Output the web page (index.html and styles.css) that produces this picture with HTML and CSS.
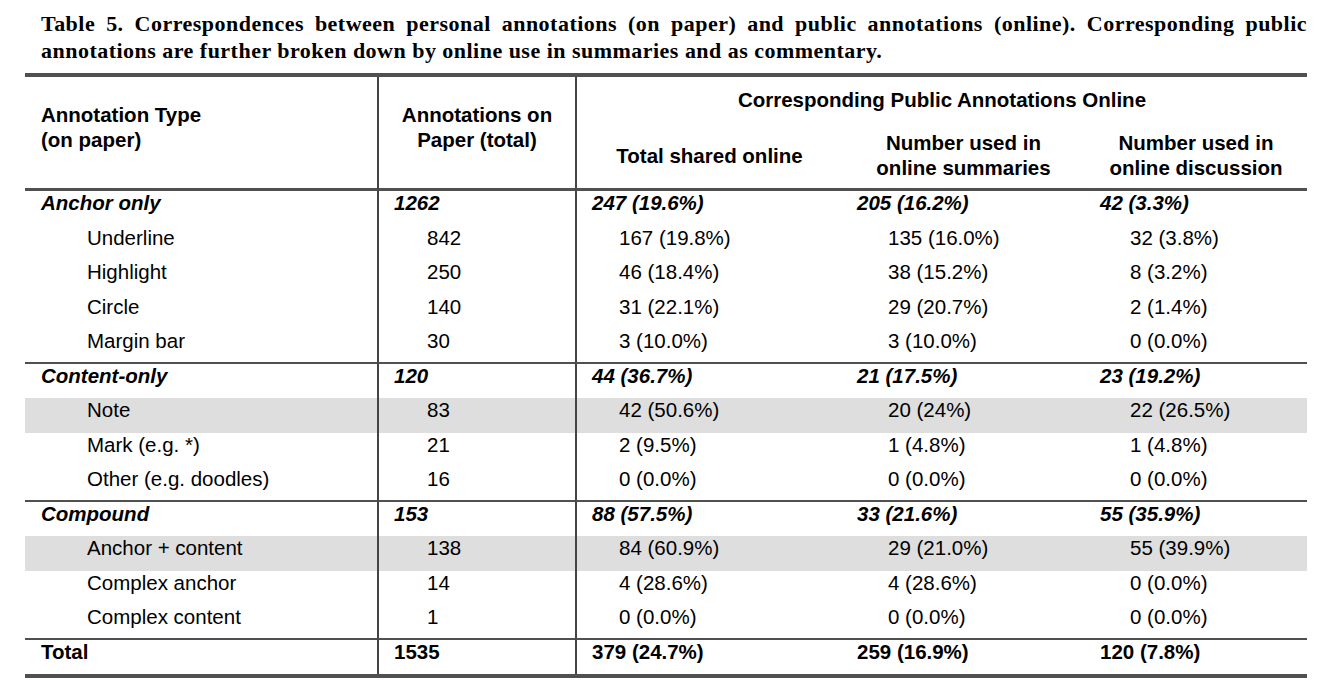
FILE: index.html
```html
<!DOCTYPE html>
<html>
<head>
<meta charset="utf-8">
<link rel="stylesheet" href="styles.css">
</head>
<body>
<div class="page">
  <p class="caption"><span class="cap-line1">Table 5. Correspondences between personal annotations (on paper) and public annotations (online). Corresponding public</span><span class="cap-line2">annotations are further broken down by online use in summaries and as commentary.</span></p>
  <table class="data">
    <colgroup>
      <col class="c1"><col class="c2"><col class="c3"><col class="c4"><col class="c5">
    </colgroup>
    <thead>
      <tr class="h1">
        <th class="type" rowspan="2">Annotation Type<br>(on paper)</th>
        <th class="paper vl" rowspan="2">Annotations on<br>Paper (total)</th>
        <th class="group vl" colspan="3">Corresponding Public Annotations Online</th>
      </tr>
      <tr class="h2">
        <th class="vl">Total shared online</th>
        <th>Number used in<br>online summaries</th>
        <th>Number used in<br>online discussion</th>
      </tr>
    </thead>
    <tbody>
      <tr class="grp"><td>Anchor only</td><td class="vl">1262</td><td class="vl">247 (19.6%)</td><td>205 (16.2%)</td><td>42 (3.3%)</td></tr>
      <tr class="sub"><td>Underline</td><td class="vl">842</td><td class="vl">167 (19.8%)</td><td>135 (16.0%)</td><td>32 (3.8%)</td></tr>
      <tr class="sub"><td>Highlight</td><td class="vl">250</td><td class="vl">46 (18.4%)</td><td>38 (15.2%)</td><td>8 (3.2%)</td></tr>
      <tr class="sub"><td>Circle</td><td class="vl">140</td><td class="vl">31 (22.1%)</td><td>29 (20.7%)</td><td>2 (1.4%)</td></tr>
      <tr class="sub pre"><td>Margin bar</td><td class="vl">30</td><td class="vl">3 (10.0%)</td><td>3 (10.0%)</td><td>0 (0.0%)</td></tr>
      <tr class="grp sep"><td>Content-only</td><td class="vl">120</td><td class="vl">44 (36.7%)</td><td>21 (17.5%)</td><td>23 (19.2%)</td></tr>
      <tr class="sub shade"><td>Note</td><td class="vl">83</td><td class="vl">42 (50.6%)</td><td>20 (24%)</td><td>22 (26.5%)</td></tr>
      <tr class="sub"><td>Mark (e.g. *)</td><td class="vl">21</td><td class="vl">2 (9.5%)</td><td>1 (4.8%)</td><td>1 (4.8%)</td></tr>
      <tr class="sub pre"><td>Other (e.g. doodles)</td><td class="vl">16</td><td class="vl">0 (0.0%)</td><td>0 (0.0%)</td><td>0 (0.0%)</td></tr>
      <tr class="grp sep"><td>Compound</td><td class="vl">153</td><td class="vl">88 (57.5%)</td><td>33 (21.6%)</td><td>55 (35.9%)</td></tr>
      <tr class="sub shade"><td>Anchor + content</td><td class="vl">138</td><td class="vl">84 (60.9%)</td><td>29 (21.0%)</td><td>55 (39.9%)</td></tr>
      <tr class="sub"><td>Complex anchor</td><td class="vl">14</td><td class="vl">4 (28.6%)</td><td>4 (28.6%)</td><td>0 (0.0%)</td></tr>
      <tr class="sub pre"><td>Complex content</td><td class="vl">1</td><td class="vl">0 (0.0%)</td><td>0 (0.0%)</td><td>0 (0.0%)</td></tr>
      <tr class="total sep"><td>Total</td><td class="vl">1535</td><td class="vl">379 (24.7%)</td><td>259 (16.9%)</td><td>120 (7.8%)</td></tr>
    </tbody>
  </table>
</div>
</body>
</html>
```
FILE: styles.css
```css
html, body {
  margin: 0;
  padding: 0;
  background: #fff;
}

.page {
  padding: 10px 0 0 25px;
  width: 1282px;
}

.caption {
  margin: 0 0 9px 16px;
  font-family: "Liberation Serif", "Times New Roman", serif;
  font-weight: bold;
  font-size: 22px;
  letter-spacing: 0.48px;
  line-height: 27px;
  color: #000;
}

.cap-line1 {
  display: block;
  text-align: justify;
  text-align-last: justify;
}

.cap-line2 {
  display: block;
}

.data {
  width: 1282px;
  table-layout: fixed;
  border-collapse: separate;
  border-spacing: 0;
  border-top: 4px solid #505050;
  border-bottom: 4px solid #505050;
  font-family: "Liberation Sans", Arial, sans-serif;
  font-size: 20.5px;
  color: #000;
}

.c1 { width: 352px; }
.c2 { width: 198px; }
.c3 { width: 267px; }
.c4 { width: 243px; }
.c5 { width: 222px; }

th {
  font-weight: bold;
  line-height: 25px;
  padding: 0;
}

.vl {
  border-left: 2px solid #444;
}

.h1 th.type,
.h1 th.paper {
  vertical-align: top;
  padding-top: 25px;
  border-bottom: 3px solid #505050;
}

.h1 th.type {
  text-align: left;
  padding-left: 16px;
}

.h1 th.paper {
  text-align: center;
}

.h1 th.group {
  text-align: center;
  padding: 10px 0;
}

.h2 th {
  text-align: center;
  vertical-align: middle;
  padding: 8px 0;
  border-bottom: 3px solid #505050;
}

td {
  line-height: 24px;
  padding: 0 0 10.5px 15px;
  vertical-align: top;
  white-space: nowrap;
}

td:first-child { padding-left: 16px; }

.grp td {
  font-weight: bold;
  font-style: italic;
}

.pre td {
  padding-bottom: 9px;
}

.sep td {
  border-top: 2px solid #505050;
  padding-bottom: 10px;
}

.total td {
  font-weight: bold;
}

.total.sep td {
  padding-bottom: 9.5px;
}

.sub td:nth-child(1) { padding-left: 62px; }
.sub td:nth-child(2) { padding-left: 48px; }
.sub td:nth-child(3) { padding-left: 42px; }
.sub td:nth-child(4) { padding-left: 46px; }
.sub td:nth-child(5) { padding-left: 45px; }

.shade td {
  background: #dedede;
}
```
